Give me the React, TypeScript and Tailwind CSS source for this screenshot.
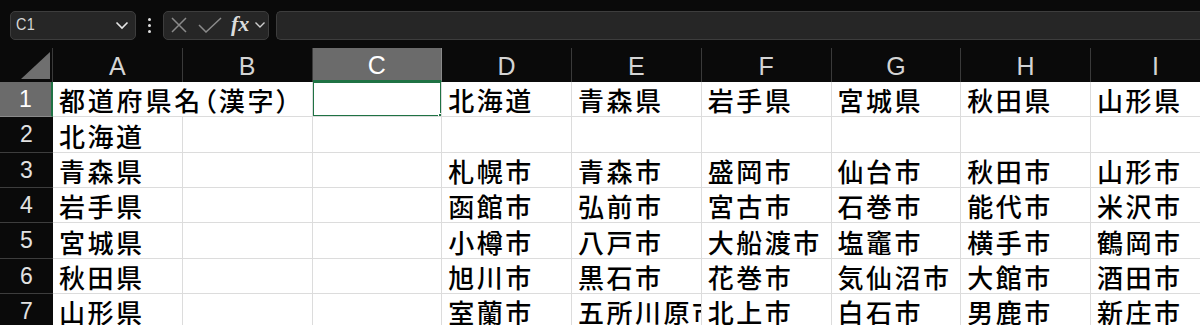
import React from 'react';

const COLS = ['A', 'B', 'C', 'D', 'E', 'F', 'G', 'H', 'I'];

const ROWS: string[][] = [
  ['都道府県名（漢字）', '', '', '北海道', '青森県', '岩手県', '宮城県', '秋田県', '山形県'],
  ['北海道', '', '', '', '', '', '', '', ''],
  ['青森県', '', '', '札幌市', '青森市', '盛岡市', '仙台市', '秋田市', '山形市'],
  ['岩手県', '', '', '函館市', '弘前市', '宮古市', '石巻市', '能代市', '米沢市'],
  ['宮城県', '', '', '小樽市', '八戸市', '大船渡市', '塩竈市', '横手市', '鶴岡市'],
  ['秋田県', '', '', '旭川市', '黒石市', '花巻市', '気仙沼市', '大館市', '酒田市'],
  ['山形県', '', '', '室蘭市', '五所川原市', '北上市', '白石市', '男鹿市', '新庄市'],
];

function FormulaBar() {
  return (
    <div className="flex items-center h-[48px] pl-[10px] pb-[8px] pt-[10px] gap-0">
      {/* name box */}
      <div className="flex items-center justify-between w-[126px] h-[29px] rounded-[5px] bg-[#262626] border border-[#3d3d3d] pl-[5px] pr-[6px]">
        <span className="text-[16px] text-[#d6d6d6] font-['Liberation_Sans_Narrow','Liberation_Sans',sans-serif] tracking-[0.5px] scale-x-90 origin-left">C1</span>
        <svg width="14" height="9" viewBox="0 0 14 9" fill="none">
          <path d="M1.5 1.5 L7 7 L12.5 1.5" stroke="#e6e6e6" strokeWidth="1.6" />
        </svg>
      </div>
      {/* dots */}
      <div className="w-[27px] flex flex-col items-center gap-[3px]">
        <span className="w-[3px] h-[3px] bg-[#e0e0e0] rounded-full" />
        <span className="w-[3px] h-[3px] bg-[#e0e0e0] rounded-full" />
        <span className="w-[3px] h-[3px] bg-[#e0e0e0] rounded-full" />
      </div>
      {/* buttons */}
      <div className="flex items-center w-[106px] h-[29px] rounded-[5px] bg-[#262626] border border-[#3d3d3d] pl-[7px]">
        <svg width="16" height="16" viewBox="0 0 16 16" fill="none">
          <path d="M1 1 L15 15 M15 1 L1 15" stroke="#8a8a8a" strokeWidth="1.5" />
        </svg>
        <svg width="24" height="16" viewBox="0 0 24 16" fill="none" className="ml-[11px]">
          <path d="M1 8 L8 15 L23 1" stroke="#8a8a8a" strokeWidth="1.5" />
        </svg>
        <span className="ml-[9px] text-[22px] leading-none italic text-[#dcdcdc] font-['Liberation_Serif',serif] font-bold -mt-[3px]">fx</span>
        <svg width="12" height="8" viewBox="0 0 12 8" fill="none" className="ml-[5px]">
          <path d="M1.5 1.5 L6 6 L10.5 1.5" stroke="#cfcfcf" strokeWidth="1.4" />
        </svg>
      </div>
      {/* formula input */}
      <div className="ml-[7px] flex-1 h-[29px] rounded-l-[5px] bg-[#262626] border border-r-0 border-[#3d3d3d]" />
    </div>
  );
}

export default function App() {
  return (
    <div className="w-[1200px] h-[325px] overflow-hidden bg-[#0a0a0a]">
      <FormulaBar />
      <div className="grid grid-cols-[53px_repeat(9,129.75px)] grid-rows-[34px_repeat(7,35.35px)]">
        {/* corner */}
        <div className="relative border-r border-[#3a3a3a]">
          <div className="absolute right-[2px] bottom-[3px] w-0 h-0 border-l-[29px] border-l-transparent border-b-[27px] border-b-[#6f6f6f]" />
        </div>
        {COLS.map((c) => (
          <div
            key={c}
            className={
              c === 'C'
                ? 'flex items-end justify-center pb-[2px] bg-[#6b6b6b] border-r border-[#8a8a8a] border-b-2 border-b-[#1f7244] text-[25px] leading-none text-white font-["Liberation_Sans",sans-serif]'
                : 'flex items-end justify-center pb-[3px] border-r border-[#3a3a3a] text-[25px] leading-none text-[#d4d4d4] font-["Liberation_Sans",sans-serif]'
            }
          >
            {c}
          </div>
        ))}
        {ROWS.map((row, ri) => (
          <React.Fragment key={ri}>
            <div
              className={
                ri === 0
                  ? 'flex items-center justify-center bg-[#6b6b6b] border-r-2 border-r-[#1f7244] border-b border-[#8a8a8a] text-[23px] text-white font-["Liberation_Sans",sans-serif]'
                  : 'flex items-center justify-center border-b border-[#3d3d3d] text-[23px] text-[#e2e2e2] font-["Liberation_Sans",sans-serif]'
              }
            >
              {ri + 1}
            </div>
            {row.map((v, ci) => {
              const spill = ri === 0 && ci === 0;
              const selected = ri === 0 && ci === 2;
              return (
                <div
                  key={ci}
                  className={
                    'relative bg-white border-b border-[#dcdcdc] flex items-end pl-[6px] pb-[3px] ' +
                    (spill ? 'overflow-visible z-10' : 'overflow-hidden border-r')
                  }
                >
                  {v && (
                    <span
                      className={
                        'whitespace-nowrap text-[26px] leading-none text-black font-medium font-["Noto_Sans_CJK_JP",sans-serif] ' +
                        (spill ? 'tracking-[2.8px] [font-feature-settings:"palt"]' : 'tracking-[2.5px]')
                      }
                    >
                      {v}
                    </span>
                  )}
                  {selected && (
                    <>
                      <div className="absolute -left-[1px] -top-[1px] -right-[1px] -bottom-[1px] border-2 border-[#1f7244]" />
                      <div className="absolute -right-[4px] -bottom-[4px] w-[7px] h-[7px] bg-[#1f7244] border border-white z-20" />
                    </>
                  )}
                </div>
              );
            })}
          </React.Fragment>
        ))}
      </div>
    </div>
  );
}
